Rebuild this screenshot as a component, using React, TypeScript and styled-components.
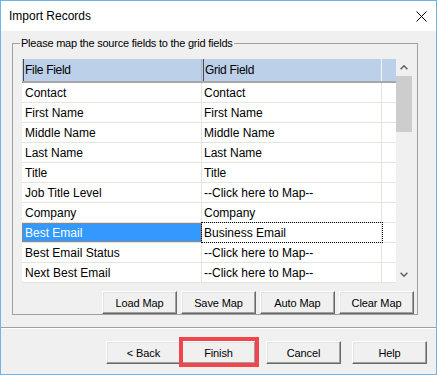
import React from 'react';
import styled, { createGlobalStyle } from 'styled-components';

const GlobalStyle = createGlobalStyle`
  html, body {
    margin: 0;
    padding: 0;
    background: #ffffff;
  }
  body {
    font-family: "Liberation Sans", Arial, sans-serif;
    color: #000;
  }
  * {
    box-sizing: border-box;
  }
`;

const Window = styled.div`
  width: 437px;
  height: 375px;
  border: 1px solid #6fb4e8;
  background: #f0f0f0;
  display: flex;
  flex-direction: column;
`;

const TitleBar = styled.div`
  height: 30px;
  flex: none;
  background: #ffffff;
  display: flex;
  align-items: center;
  justify-content: space-between;
  padding: 0 9px 0 8px;
  font-size: 12px;
`;

const Body = styled.div`
  flex: 1;
  display: flex;
  flex-direction: column;
  padding-top: 5px;
`;

const Group = styled.fieldset`
  margin: 0 0 0 11px;
  width: 406px;
  min-inline-size: 0;
  border: 1px solid #a0a0a0;
  padding: 0 5px 0 9px;
`;

const Legend = styled.legend`
  margin-left: -2px;
  padding: 0 1px;
  font-size: 11px;
  line-height: 14px;
  letter-spacing: -0.22px;
`;

const Grid = styled.div`
  margin-top: 9px;
  height: 224px;
  display: flex;
`;

const Table = styled.div`
  flex: 1;
  background: #ffffff;
  display: flex;
  flex-direction: column;
`;

const HeaderRow = styled.div`
  height: 24px;
  flex: none;
  display: grid;
  grid-template-columns: 180px 180px 1fr;
  background: #bcd0ea;
  border-bottom: 2px solid #a7a7a7;
`;

const HeaderCell = styled.div<{ last?: boolean }>`
  display: flex;
  align-items: center;
  padding-left: 3px;
  font-size: 12px;
  letter-spacing: -0.3px;
  border-right: ${(p) => (p.last ? '1px solid #f4f7fb' : '1px solid #a9b8cb')};
  box-shadow: inset 1px 0 0 #bcd0ea, inset 2px 0 0 #4a4a4a;
`;

const HeaderFill = styled.div``;

const Row = styled.div`
  height: 20px;
  flex: none;
  display: grid;
  grid-template-columns: 180px 180px 1fr;
  border-bottom: 1px solid #e4e4df;
`;

const Cell = styled.div<{ selected?: boolean; focus?: boolean }>`
  display: flex;
  align-items: center;
  padding-left: 3px;
  font-size: 12px;
  white-space: nowrap;
  border-right: 1px solid ${(p) => (p.selected ? '#3399ff' : '#e4e4df')};
  background: ${(p) => (p.selected ? '#3399ff' : '#ffffff')};
  color: ${(p) => (p.selected ? '#ffffff' : '#000000')};
  outline: ${(p) =>
    p.selected ? '1px dotted #d9742c' : p.focus ? '1px dotted #000000' : 'none'};
  outline-offset: ${(p) => (p.focus ? '0px' : '-1px')};
`;

const MapCell = styled(Cell)`
  padding-left: 2px;
`;

const ScrollBar = styled.div`
  width: 16px;
  flex: none;
  background: #f0f0f0;
  display: flex;
  flex-direction: column;
`;

const ArrowButton = styled.div`
  height: 17px;
  flex: none;
  display: flex;
  align-items: center;
  justify-content: center;
`;

const Track = styled.div`
  flex: 1;
`;

const Thumb = styled.div`
  height: 56px;
  background: #cdcdcd;
`;

const MapButtons = styled.div`
  margin-top: 8px;
  margin-right: -2px;
  display: flex;
  justify-content: flex-end;
  gap: 4px;
`;

const Button = styled.button<{ highlighted?: boolean; gapLeft?: number }>`
  position: relative;
  width: 75px;
  height: 23px;
  margin: 0 0 0 ${(p) => p.gapLeft ?? 0}px;
  padding: 0;
  background: #f0f0f0;
  font-family: "Liberation Sans", Arial, sans-serif;
  font-size: 11px;
  letter-spacing: -0.1px;
  color: #000;
  border: 1px solid;
  border-color: #ffffff #696969 #696969 #ffffff;
  box-shadow: inset -1px -1px 0 #a0a0a0, inset 1px 1px 0 #e3e3e3;
  &::after {
    content: '';
    display: ${(p) => (p.highlighted ? 'block' : 'none')};
    position: absolute;
    top: -5px;
    left: -3px;
    right: -4px;
    bottom: -4px;
    border: 4px solid #f1454b;
  }
`;

const Separator = styled.div`
  margin-top: 12px;
  border-top: 1px solid #a0a0a0;
  border-bottom: 1px solid #ffffff;
`;

const Footer = styled.div`
  margin-top: 12px;
  padding-right: 9px;
  display: flex;
  justify-content: flex-end;
`;

const Chevron = ({ down }: { down?: boolean }) => (
  <svg width="8" height="5" viewBox="0 0 8 5">
    <path
      d={down ? 'M0.6 0.8 L4 4.2 L7.4 0.8' : 'M0.6 4.2 L4 0.8 L7.4 4.2'}
      fill="none"
      stroke="#606060"
      strokeWidth="1.5"
    />
  </svg>
);

const CloseIcon = () => (
  <svg width="11" height="11" viewBox="0 0 11 11">
    <path d="M0.5 0.5 L10.5 10.5 M10.5 0.5 L0.5 10.5" stroke="#000" strokeWidth="1" />
  </svg>
);

const UNMAPPED = '--Click here to Map--';

const rows: [string, string][] = [
  ['Contact', 'Contact'],
  ['First Name', 'First Name'],
  ['Middle Name', 'Middle Name'],
  ['Last Name', 'Last Name'],
  ['Title', 'Title'],
  ['Job Title Level', UNMAPPED],
  ['Company', 'Company'],
  ['Best Email', 'Business Email'],
  ['Best Email Status', UNMAPPED],
  ['Next Best Email', UNMAPPED],
];

const SELECTED = 7;

export default function App() {
  return (
    <>
      <GlobalStyle />
      <Window>
        <TitleBar>
          <span>Import Records</span>
          <CloseIcon />
        </TitleBar>
        <Body>
          <Group>
            <Legend>Please map the source fields to the grid fields</Legend>
            <Grid>
              <Table>
                <HeaderRow>
                  <HeaderCell>File Field</HeaderCell>
                  <HeaderCell last>Grid Field</HeaderCell>
                  <HeaderFill />
                </HeaderRow>
                {rows.map(([file, grid], i) => (
                  <Row key={file}>
                    <Cell selected={i === SELECTED}>{file}</Cell>
                    <MapCell focus={i === SELECTED}>{grid}</MapCell>
                    <div />
                  </Row>
                ))}
              </Table>
              <ScrollBar>
                <ArrowButton>
                  <Chevron />
                </ArrowButton>
                <Track>
                  <Thumb />
                </Track>
                <ArrowButton>
                  <Chevron down />
                </ArrowButton>
              </ScrollBar>
            </Grid>
            <MapButtons>
              <Button>Load Map</Button>
              <Button>Save Map</Button>
              <Button>Auto Map</Button>
              <Button>Clear Map</Button>
            </MapButtons>
          </Group>
          <Separator />
          <Footer>
            <Button>&lt; Back</Button>
            <Button highlighted>Finish</Button>
            <Button gapLeft={10}>Cancel</Button>
            <Button gapLeft={11}>Help</Button>
          </Footer>
        </Body>
      </Window>
    </>
  );
}
